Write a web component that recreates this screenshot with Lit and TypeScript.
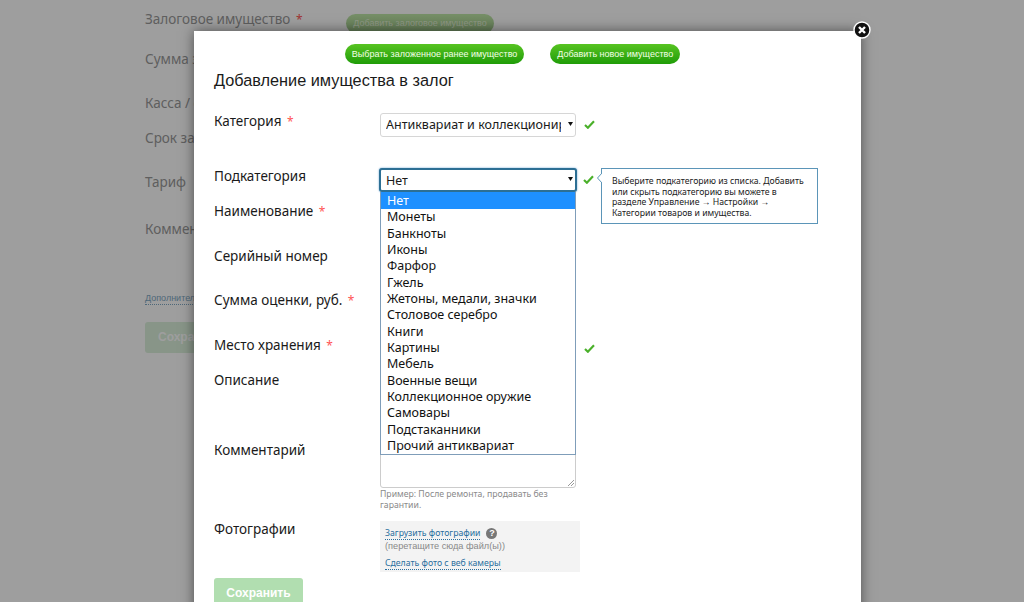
import { LitElement, html, css } from "lit";
import { customElement } from "lit/decorators.js";

const options = ["Нет","Монеты","Банкноты","Иконы","Фарфор","Гжель","Жетоны, медали, значки","Столовое серебро","Книги","Картины","Мебель","Военные вещи","Коллекционное оружие","Самовары","Подстаканники","Прочий антиквариат"];

const check = html`<svg class="check" width="11" height="9" viewBox="0 0 12 10"><path d="M1 5.5 L4.2 8.6 L11 1.4" fill="none" stroke="#4ab02a" stroke-width="2.4"/></svg>`;
const arrow = html`<svg class="arrow" width="5" height="4" viewBox="0 0 5 4"><path d="M0 0H5L2.5 4Z" fill="#111"/></svg>`;

@customElement("app-root")
export class AppRoot extends LitElement {
  static styles = css`
    :host { display: block; width: 1024px; height: 602px; position: relative; overflow: hidden; background: #fff; font-family: "Noto Sans", sans-serif; }
    .page { padding: 10px 0 0 145px; color: #999; display: flex; flex-direction: column; align-items: flex-start; }
    .bg-row { font-size: 13.5px; line-height: 19px; display: flex; }
    .bg-row .t { width: 201px; white-space: nowrap; }
    .bg-btn { margin-top: 4px; width: 148px; height: 19px; border-radius: 10px; background: linear-gradient(#c0e8a8, #9cc488); color: #e6f5d8; font: 9px/19px "Liberation Sans", sans-serif; text-align: center; white-space: nowrap; }
    .req { color: #f55; font-size: 12px; margin-left: 2px; }
    .bg-link { font: 9px/12px "Liberation Sans", sans-serif; color: #7fa9c4; border-bottom: 1px dotted #7fa9c4; margin-top: 53px; }
    .bg-save { margin-top: 17px; width: 100px; height: 31px; border-radius: 3px; background: #dcf0dc; color: #fff; font: bold 12px/31px "Liberation Sans", sans-serif; padding-left: 13px; box-sizing: border-box; }
    .overlay { position: absolute; inset: 0; background: rgba(0,0,0,.38); }
    .modal { position: absolute; left: 194px; top: 31px; width: 667px; height: 600px; background: #fff; box-shadow: 0 0 12px rgba(0,0,0,.5); box-sizing: border-box; padding: 13px 20px 0; color: #1a1a1a; }
    .close { position: absolute; left: 659px; top: -10px; }
    .top { display: flex; justify-content: center; gap: 26px; margin-left: -30px; }
    .btn { height: 20px; border-radius: 10px; background: linear-gradient(#58c422, #1f9c08); color: #f3ffe6; font: 9px/20px "Liberation Sans", sans-serif; padding: 0 7px; white-space: nowrap; }
    h1 { font: 400 16.3px/20px "Liberation Sans", sans-serif; margin: 6px 0 0; color: #1a1a1a; }
    .form { margin-top: 18px; position: relative; }
    .row { display: grid; grid-template-columns: 166px 196px auto; align-items: start; font-size: 13.5px; line-height: 19px; }
    .lab { white-space: nowrap; margin-top: 4px; }
    .ctrl { box-sizing: border-box; width: 196px; height: 24px; border: 1px solid #d6d6d6; border-radius: 3px; background: #fff; font-size: 12.5px; line-height: 22px; padding: 0 5px; position: relative; overflow: hidden; white-space: nowrap; margin-top: 5px; }
    .ctrl span { display: block; width: 175px; overflow: hidden; }
    .ctrl.focus { width: 198px; margin-left: -1px; border: 2px solid #2d6f94; line-height: 21px; padding: 0 5px; box-shadow: 0 0 2px #5b9dd0; overflow: visible; }
    .arrow { position: absolute; right: 2px; top: 8px; }
    .ctrl.focus .arrow { top: 7px; }
    .check { margin: 12px 0 0 8px; display: block; }
    .r1 { height: 55px; }
    .r2 { height: 35px; }
    .r3 { height: 45px; }
    .r4 { height: 44px; }
    .r5 { height: 45px; }
    .r6 { height: 35px; }
    .r7 { height: 70px; }
    .r8 { height: 79px; }
    .r9 { height: 57px; }
    .r2 .check { margin-left: 7px; }
    .textarea { box-sizing: border-box; width: 196px; height: 51px; border: 1px solid #ccc; border-radius: 3px; position: relative; }
    .hint { font-size: 8.7px; line-height: 11px; color: #8a8a8a; margin-top: 1px; width: 190px; }
    .grip { position: absolute; right: 1px; bottom: 1px; }
    .photos { box-sizing: border-box; width: 200px; height: 51px; background: #f3f3f3; padding: 6px 5px 0; font: 9.2px/12px "Liberation Sans", sans-serif; color: #888; margin-top: 5px; }
    .photos a { color: #2a6f9e; border-bottom: 1px dotted #2a6f9e; font: 8.7px/12px "Noto Sans", sans-serif; }
    .photos .l1 { display: flex; align-items: center; gap: 6px; }
    .photos .q { width: 11px; height: 11px; border-radius: 50%; background: #777; color: #fff; font: bold 9px/11px "Liberation Sans", sans-serif; text-align: center; }
    .photos .l3 { margin-top: 5px; }
    .save { width: 89px; height: 32px; border-radius: 3px; background: #b1deb0; color: #fff; font: bold 12px/31px "Liberation Sans", sans-serif; text-align: center; margin-top: 5px; }
    .dropdown { position: absolute; left: 166px; top: 84px; width: 196px; box-sizing: border-box; height: 263px; border: 1px solid #7f9db9; border-top: 0; background: #fff; font-size: 12.5px; line-height: 16.33px; overflow: hidden; color: #111; }
    .dropdown div { padding: 0 6px; white-space: nowrap; }
    .dropdown .sel { background: #1e90ff; color: #fff; padding-top: 1px; }
    .tip { position: absolute; left: 387px; top: 60px; box-sizing: border-box; width: 217px; height: 56px; background: #fff; border: 1px solid #5b95b8; padding: 7px 10px; font-size: 8.7px; line-height: 10.5px; color: #222; }
    .tip svg { position: absolute; left: -5px; top: 4px; }
  `;
  render() {
    return html`
      <div class="page">
        <div class="bg-row" style="height:40px"><div class="t">Залоговое имущество <span class="req">*</span></div><div class="bg-btn">Добавить залоговое имущество</div></div>
        <div class="bg-row" style="height:44px">Сумма займа</div>
        <div class="bg-row" style="height:35px">Касса / счёт</div>
        <div class="bg-row" style="height:44px">Срок займа</div>
        <div class="bg-row" style="height:47px">Тариф</div>
        <div class="bg-row" style="height:19px">Комментарий</div>
        <div class="bg-link">Дополнительные поля</div>
        <div class="bg-save">Сохранить</div>
      </div>
      <div class="overlay"></div>
      <div class="modal">
        <svg class="close" width="18" height="18" viewBox="0 0 18 18"><circle cx="9" cy="9" r="8" fill="#111" stroke="#fff" stroke-width="1.4"/><path d="M6 6 L12 12 M12 6 L6 12" stroke="#fff" stroke-width="2.4"/></svg>
        <div class="top"><div class="btn">Выбрать заложенное ранее имущество</div><div class="btn">Добавить новое имущество</div></div>
        <h1>Добавление имущества в залог</h1>
        <div class="form">
          <div class="row r1"><div class="lab">Категория <span class="req">*</span></div><div class="ctrl"><span>Антиквариат и коллекционирование</span>${arrow}</div>${check}</div>
          <div class="row r2"><div class="lab">Подкатегория</div><div class="ctrl focus"><span>Нет</span>${arrow}</div>${check}</div>
          <div class="row r3"><div class="lab">Наименование <span class="req">*</span></div></div>
          <div class="row r4"><div class="lab">Серийный номер</div></div>
          <div class="row r5"><div class="lab">Сумма оценки, руб. <span class="req">*</span></div></div>
          <div class="row r6"><div class="lab">Место хранения <span class="req">*</span></div><div></div>${check}</div>
          <div class="row r7"><div class="lab">Описание</div></div>
          <div class="row r8"><div class="lab">Комментарий</div><div>
            <div class="textarea"><svg class="grip" width="7" height="7" viewBox="0 0 7 7"><path d="M1 7 L7 1 M4 7 L7 4" stroke="#999"/></svg></div>
            <div class="hint">Пример: После ремонта, продавать без гарантии.</div></div></div>
          <div class="row r9"><div class="lab">Фотографии</div><div class="photos">
            <div class="l1"><a>Загрузить фотографии</a><span class="q">?</span></div>
            <div>(перетащите сюда файл(ы))</div>
            <div class="l3"><a>Сделать фото с веб камеры</a></div>
          </div></div>
          <div class="save">Сохранить</div>
          <div class="dropdown">${options.map((o, i) => html`<div class=${i === 0 ? "sel" : ""}>${o}</div>`)}</div>
          <div class="tip"><svg width="5" height="10" viewBox="0 0 5 10"><path d="M5 0 L0.5 5 L5 10" fill="#fff" stroke="#5b95b8"/></svg>Выберите подкатегорию из списка. Добавить или скрыть подкатегорию вы можете в разделе Управление → Настройки → Категории товаров и имущества.</div>
        </div>
      </div>
    `;
  }
}
